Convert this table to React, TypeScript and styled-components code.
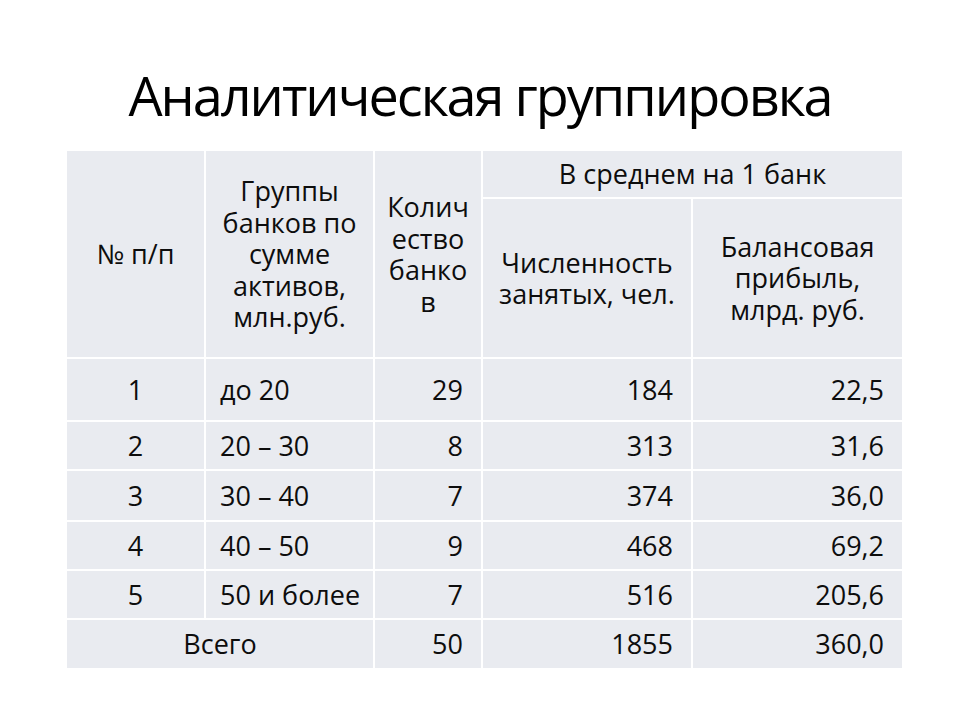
import React from 'react';
import styled, { createGlobalStyle } from 'styled-components';

interface Row {
  num: string;
  group: string;
  banks: string;
  staff: string;
  profit: string;
}

const rows: Row[] = [
  { num: '1', group: 'до 20', banks: '29', staff: '184', profit: '22,5' },
  { num: '2', group: '20 – 30', banks: '8', staff: '313', profit: '31,6' },
  { num: '3', group: '30 – 40', banks: '7', staff: '374', profit: '36,0' },
  { num: '4', group: '40 – 50', banks: '9', staff: '468', profit: '69,2' },
  { num: '5', group: '50 и более', banks: '7', staff: '516', profit: '205,6' },
];

const rowHeights = [63, 49, 51, 49, 49];

const App = () => (
  <>
    <GlobalStyle />
    <Slide>
      <Title>Аналитическая группировка</Title>
      <Table>
        <colgroup>
          <col style={{ width: 139 }} />
          <col style={{ width: 169 }} />
          <col style={{ width: 108 }} />
          <col style={{ width: 210 }} />
          <col style={{ width: 211 }} />
        </colgroup>
        <thead>
          <tr>
            <HeadCell rowSpan={2}>№ п/п</HeadCell>
            <HeadCell rowSpan={2}>
              Группы
              <br />
              банков по
              <br />
              сумме
              <br />
              активов,
              <br />
              млн.руб.
            </HeadCell>
            <HeadCell rowSpan={2}>
              Колич
              <br />
              ество
              <br />
              банко
              <br />в
            </HeadCell>
            <HeadCell colSpan={2} $height={48}>
              В среднем на 1 банк
            </HeadCell>
          </tr>
          <tr>
            <HeadCell $height={160}>
              Численность
              <br />
              занятых, чел.
            </HeadCell>
            <HeadCell>
              Балансовая
              <br />
              прибыль,
              <br />
              млрд. руб.
            </HeadCell>
          </tr>
        </thead>
        <tbody>
          {rows.map((row, i) => (
            <tr key={row.num}>
              <Cell $align='center' $height={rowHeights[i]}>
                {row.num}
              </Cell>
              <Cell $align='left'>{row.group}</Cell>
              <Cell $align='right'>{row.banks}</Cell>
              <Cell $align='right'>{row.staff}</Cell>
              <Cell $align='right'>{row.profit}</Cell>
            </tr>
          ))}
          <tr>
            <Cell colSpan={2} $align='center' $height={50}>
              Всего
            </Cell>
            <Cell $align='right'>50</Cell>
            <Cell $align='right'>1855</Cell>
            <Cell $align='right'>360,0</Cell>
          </tr>
        </tbody>
      </Table>
    </Slide>
  </>
);

const GlobalStyle = createGlobalStyle`
  html, body {
    margin: 0;
    padding: 0;
    background: #ffffff;
  }

  body {
    font-family: 'Open Sans', 'Noto Sans', sans-serif;
    color: #0d0d0d;
  }
`;

const Slide = styled.div`
  width: 960px;
  height: 720px;
  overflow: hidden;
  display: flex;
  flex-direction: column;
`;

const Title = styled.h1`
  margin: 0;
  padding-top: 57px;
  height: 149px;
  flex-shrink: 0;
  box-sizing: border-box;
  text-align: center;
  font-size: 54px;
  font-weight: 400;
  line-height: 76px;
  letter-spacing: -2px;
  color: #000000;
  white-space: nowrap;
`;

const Table = styled.table`
  margin-left: 65px;
  width: 837px;
  table-layout: fixed;
  border-collapse: collapse;
  font-size: 27px;
`;

const HeadCell = styled.th<{ $height?: number }>`
  background: #e9ebf0;
  border: 2px solid #ffffff;
  font-weight: 400;
  text-align: center;
  vertical-align: middle;
  line-height: 31.5px;
  padding: 0 4px;
  height: ${props => (props.$height ? `${props.$height}px` : 'auto')};
  box-sizing: border-box;
`;

const Cell = styled.td<{ $align: 'left' | 'center' | 'right'; $height?: number }>`
  background: #e9ebf0;
  border: 2px solid #ffffff;
  text-align: ${props => props.$align};
  vertical-align: middle;
  line-height: 30px;
  white-space: nowrap;
  padding: 0 ${props => (props.$align === 'right' ? '18px' : '14px')};
  height: ${props => (props.$height ? `${props.$height}px` : 'auto')};
  box-sizing: border-box;
`;

export default App;
